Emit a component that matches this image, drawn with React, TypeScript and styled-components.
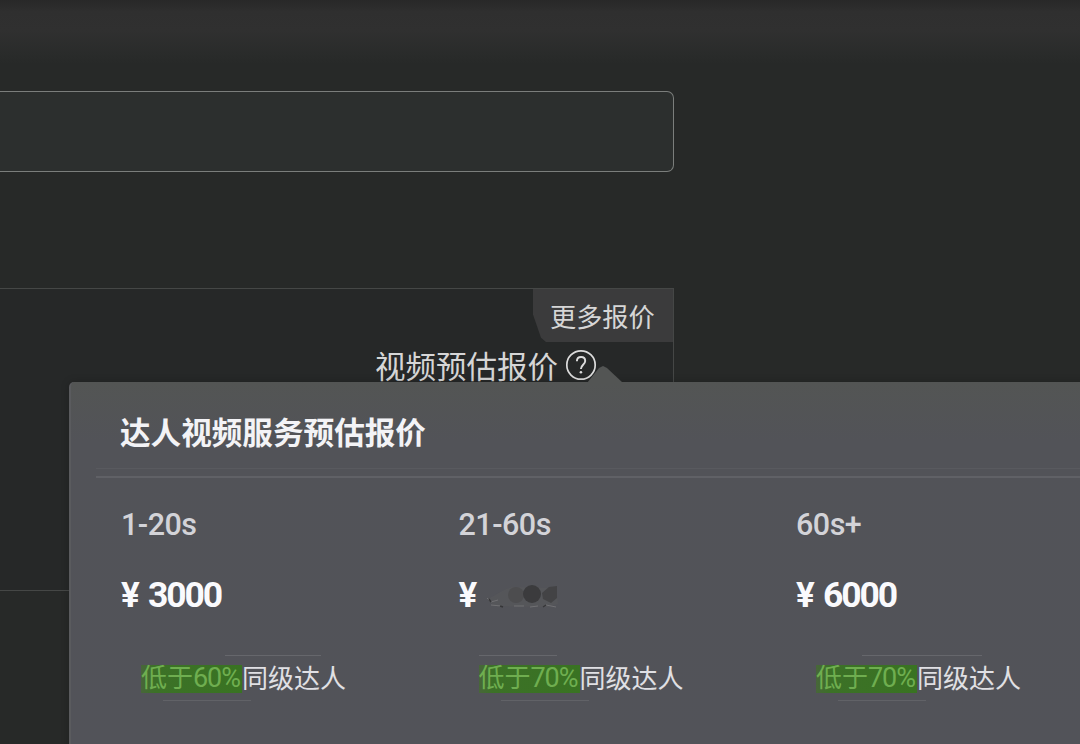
import styled, { createGlobalStyle } from 'styled-components';

interface Quote {
  duration: string;
  price: string | null;
  percent: string;
  lineStart: number;
  lineWidth: number;
}

const quotes: Quote[] = [
  { duration: '1-20s', price: '3000', percent: '60%', lineStart: 84, lineWidth: 96 },
  { duration: '21-60s', price: null, percent: '70%', lineStart: 0, lineWidth: 78 },
  { duration: '60s+', price: '6000', percent: '70%', lineStart: 46, lineWidth: 120 },
];

const HelpIcon = () => (
  <svg width="32" height="32" viewBox="0 0 32 32" fill="none" stroke="#dcdcdc">
    <circle cx="16" cy="16" r="14.2" strokeWidth="1.7" />
    <path
      d="M11.9 12.2c0-2.6 1.7-4.2 4.2-4.2s4.1 1.6 4.1 3.9c0 3.4-4.3 4.4-4.3 8"
      strokeWidth="1.9"
    />
    <circle cx="15.9" cy="23.3" r="1.3" fill="#dcdcdc" stroke="none" />
  </svg>
);

// 가려진 가격
const HiddenPrice = () => (
  <svg width="74" height="28" viewBox="0 0 74 28">
    <path d="M2 18l16-9 8-3 44 1 2 16-10 3-54-1z" fill="#58585a" opacity="0.65" />
    <path d="M1 17l4 4 7-2M5 24l10 1M28 25h10M44 26l8-1M60 24l10 2" stroke="#707073" fill="none" />
    <path d="M3 18l2 3M14 25l3 1M57 26l3-2" stroke="#363638" strokeWidth="1.4" />
    <circle cx="30" cy="14" r="8" fill="#4d4d4f" />
    <circle cx="46" cy="13" r="9" fill="#3b3b3d" />
    <path d="M56 12l7-6 8-1v12l-6 5-8-4z" fill="#434345" />
  </svg>
);

const App = () => {
  return (
    <>
      <GlobalStyle />
      <Page>
        <TopBar />
        <FieldBox />
        <QuotePanel>
          <MoreTab>更多报价</MoreTab>
          <QuoteLabel>
            视频预估报价
            <HelpIcon />
          </QuoteLabel>
        </QuotePanel>
        <Popover>
          <Arrow />
          <PopoverTitle>达人视频服务预估报价</PopoverTitle>
          <QuoteGrid>
            {quotes.map((quote) => (
              <QuoteColumn key={quote.duration}>
                <Duration>{quote.duration}</Duration>
                <Price>
                  <Currency>¥</Currency>
                  {quote.price ?? <HiddenPrice />}
                </Price>
                <Compare $start={quote.lineStart} $width={quote.lineWidth}>
                  <Lower>
                    低于<Percent>{quote.percent}</Percent>
                  </Lower>
                  <Peers>同级达人</Peers>
                </Compare>
              </QuoteColumn>
            ))}
          </QuoteGrid>
        </Popover>
      </Page>
    </>
  );
};

const GlobalStyle = createGlobalStyle`
  * {
    box-sizing: border-box;
  }

  body {
    margin: 0;
    background: #272928;
  }
`;

const Page = styled.div`
  position: relative;
  width: 1080px;
  height: 744px;
  overflow: hidden;
  background: #272928;
  font-family: Roboto, 'Noto Sans CJK SC', sans-serif;
`;

const TopBar = styled.div`
  height: 91px;
  background: linear-gradient(#282828 0, #2f2f2f 12px, #303030 30px, #292b2a 56px, #272928 64px);
`;

const FieldBox = styled.div`
  width: 674px;
  height: 81px;
  border: 1.5px solid #7b7e7c;
  border-left: none;
  border-radius: 0 7px 7px 0;
  background: #2c2f2e;
`;

const QuotePanel = styled.div`
  display: flex;
  flex-direction: column;
  width: 674px;
  height: 303px;
  margin-top: 116px;
  border: 1px solid #454746;
  border-left: none;
  background: #262828;
`;

const MoreTab = styled.div`
  align-self: flex-end;
  width: 140px;
  height: 53px;
  padding-left: 17px;
  clip-path: polygon(0 0, 100% 0, 100% 100%, 13px 100%, 8px 92%, 0 48%);
  background: #3b3b3c;
  color: #d6d6d6;
  font-size: 26.2px;
  font-weight: 400;
  line-height: 58px;
  white-space: nowrap;
`;

const QuoteLabel = styled.div`
  display: flex;
  align-items: center;
  align-self: flex-end;
  gap: 7px;
  height: 44px;
  margin-top: 1px;
  margin-right: 76px;
  color: #d6d6d6;
  font-size: 30.5px;
  font-weight: 400;
  white-space: nowrap;
`;

const Popover = styled.div`
  position: absolute;
  top: 382px;
  left: 69px;
  width: 1040px;
  height: 380px;
  padding-left: 27px;
  border-left: 2px solid #5a5b5e;
  border-radius: 5px 0 0 0;
  background: linear-gradient(#535554 0, #525358 60px, #525359 100%);
  box-shadow: 0 0 8px rgba(0, 0, 0, 0.2);
`;

const Arrow = styled.div`
  position: absolute;
  top: -16px;
  left: 516px;
  width: 36px;
  height: 17px;
  clip-path: polygon(0 100%, 12px 2px, 16px 0, 20px 2px, 100% 100%);
  background: #535554;
`;

const PopoverTitle = styled.div`
  height: 96px;
  margin-left: -2px;
  padding-left: 24px;
  border-bottom: 2px solid #606166;
  background: linear-gradient(#595a5f, #595a5f) 0 86px / 100% 1px no-repeat;
  color: #f3f3f6;
  font-size: 30.6px;
  font-weight: 700;
  line-height: 104px;
`;

const QuoteGrid = styled.div`
  display: grid;
  grid-template-columns: repeat(3, 337.5px);
  padding: 28px 0 0 23px;
`;

const QuoteColumn = styled.div`
  display: flex;
  flex-direction: column;
`;

const Duration = styled.div`
  height: 38px;
  color: #d3d3d8;
  font-size: 30.5px;
  font-weight: 500;
  letter-spacing: -0.5px;
  line-height: 38px;
`;

const Price = styled.div`
  display: flex;
  align-items: center;
  height: 44px;
  margin-top: 29px;
  color: #fafafd;
  font-size: 35.5px;
  font-weight: 700;
  letter-spacing: -2.1px;
`;

const Currency = styled.span`
  width: 27px;
  font-size: 35px;
`;

const Compare = styled.div<{ $start: number; $width: number }>`
  display: flex;
  align-items: center;
  height: 46px;
  margin: 38px 0 0 20px;
  background:
    linear-gradient(#66676c, #66676c) ${({ $start }) => $start}px 0 /
      ${({ $width }) => $width}px 1px no-repeat,
    linear-gradient(#616267, #616267) 22px 100% / 88px 1px no-repeat;
  font-size: 26px;
  font-weight: 400;
  white-space: nowrap;
`;

const Lower = styled.span`
  width: 101px;
  height: 28px;
  margin-top: 2px;
  background: linear-gradient(90deg, #48663a 0, #3c7127 14px, #397322 100%);
  color: #6fae50;
  line-height: 27px;
`;

const Percent = styled.span`
  font-size: 27px;
  font-weight: 400;
  letter-spacing: -1.1px;
`;

const Peers = styled.span`
  margin-top: 2px;
  color: #e0e0e4;
  line-height: 27px;
`;

export default App;
